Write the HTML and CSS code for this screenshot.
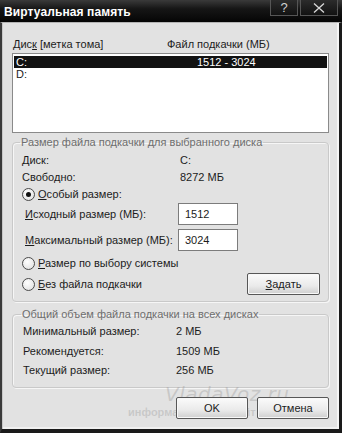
FILE: index.html
```html
<!DOCTYPE html>
<html lang="ru">
<head>
<meta charset="utf-8">
<title>Виртуальная память</title>
<link rel="stylesheet" href="styles.css">
</head>
<body>
<div class="window">
  <div class="titlebar">
    <span class="title">Виртуальная память</span>
    <div class="tb-buttons">
      <span class="tb-btn tb-help">?</span>
      <span class="tb-btn tb-close">
        <svg width="14" height="10" viewBox="0 0 14 10"><path d="M2 0.5 L12 9.5 M12 0.5 L2 9.5" stroke="#d8d8d8" stroke-width="1.3" fill="none"/></svg>
      </span>
    </div>
  </div>
  <div class="frame">
    <div class="list-head">
      <span class="col-disk">Дис<u>к</u> [метка тома]</span>
      <span>Файл подкачки (МБ)</span>
    </div>
    <div class="listbox">
      <div class="list-row selected"><span class="col-drive">C:</span><span>1512 - 3024</span></div>
      <div class="list-row"><span class="col-drive">D:</span><span></span></div>
    </div>

    <fieldset class="group group-one">
      <legend>Размер файла подкачки для выбранного диска</legend>
      <div class="info-row"><span class="info-label">Диск:</span><span>C:</span></div>
      <div class="info-row"><span class="info-label">Свободно:</span><span>8272 МБ</span></div>
      <div class="radio-row"><span class="radio checked"></span><span><u>О</u>собый размер:</span></div>
      <div class="field-row"><span class="field-label"><u>И</u>сходный размер (МБ):</span><span class="input">1512</span></div>
      <div class="field-row second"><span class="field-label"><u>М</u>аксимальный размер (МБ):</span><span class="input">3024</span></div>
      <div class="radio-row sys"><span class="radio"></span><span><u>Р</u>азмер по выбору системы</span></div>
      <div class="last-row">
        <div class="radio-row"><span class="radio"></span><span><u>Б</u>ез файла подкачки</span></div>
        <span class="button set"><u>З</u>адать</span>
      </div>
    </fieldset>

    <fieldset class="group group-two">
      <legend>Общий объем файла подкачки на всех дисках</legend>
      <div class="total-row"><span class="total-label">Минимальный размер:</span><span>2 МБ</span></div>
      <div class="total-row"><span class="total-label">Рекомендуется:</span><span>1509 МБ</span></div>
      <div class="total-row"><span class="total-label">Текущий размер:</span><span>256 МБ</span></div>
    </fieldset>

    <div class="watermark">
      <span class="wm-big">VladaVoz.ru</span>
      <span class="wm-small">информационный сайт</span>
    </div>

    <div class="dialog-buttons">
      <span class="button">OK</span>
      <span class="button">Отмена</span>
    </div>
  </div>
</div>
</body>
</html>
```

FILE: styles.css
```css
* { box-sizing: border-box; }
html, body { margin: 0; padding: 0; background: #1e1e1e; }
body {
  font-family: "Liberation Sans", Arial, sans-serif;
  font-size: 11px;
  color: #1c1c1c;
}
u { text-decoration: underline; text-underline-offset: 1px; }

.window {
  width: 342px;
  height: 433px;
  display: flex;
  flex-direction: column;
  overflow: hidden;
}

.titlebar {
  height: 22px;
  flex: none;
  display: flex;
  justify-content: space-between;
  align-items: flex-start;
  background: linear-gradient(#3a3a3a, #161616 40%, #050505);
}
.title {
  color: #fff;
  font-weight: bold;
  font-size: 12px;
  line-height: 12px;
  padding: 6px 0 0 4px;
  letter-spacing: 0.1px;
}
.tb-buttons {
  display: flex;
  gap: 2px;
  padding-right: 4px;
}
.tb-btn {
  height: 16px;
  display: flex;
  align-items: center;
  justify-content: center;
  border: 1px solid #565656;
  border-top: none;
  background: linear-gradient(#2c2c2c, #121212);
  color: #d0d0d0;
}
.tb-help { width: 28px; font-size: 13px; line-height: 14px; }
.tb-close { width: 38px; }

.frame {
  flex: 1;
  position: relative;
  background: #e2e2e2;
  border-top: 1px solid #b4b4b4;
  border-left: 2px solid #3a3a3a;
  border-right: 3px solid #1a1a1a;
  border-bottom: 4px solid #1a1a1a;
  box-shadow: inset 1px 0 0 #c8c8c8, inset -2px 0 0 #f4f4f4, inset 0 -2px 0 #f0f0f0;
  padding: 0 10px;
  display: flex;
  flex-direction: column;
}

.list-head {
  margin-top: 15px;
  height: 13px;
  line-height: 13px;
  display: flex;
  padding-left: 1px;
}
.col-disk { width: 154px; }

.listbox {
  margin-top: 2px;
  height: 80px;
  background: #fff;
  border: 1px solid #8a8a8a;
  padding: 2px 1px 0;
}
.list-row {
  height: 12px;
  line-height: 12px;
  display: flex;
  padding-left: 2px;
}
.list-row.selected { background: #121212; color: #fff; }
.col-drive { width: 181px; }

.group {
  margin: 3px 0 0;
  padding: 3px 8px 6px 9px;
  border: 1px solid #c9c9c9;
  border-radius: 4px;
  box-shadow: inset 1px 1px 0 #f6f6f6, 1px 1px 0 #f6f6f6;
  min-width: 0;
}
.group legend {
  padding: 0 1px;
  margin-left: -2px;
  line-height: 13px;
  color: #6e6e6e;
}

.info-row { display: flex; line-height: 17px; height: 17px; }
.info-label { width: 158px; }

.radio-row {
  display: flex;
  align-items: center;
  gap: 3px;
  height: 17px;
  line-height: 17px;
}
.radio {
  width: 13px;
  height: 13px;
  border-radius: 50%;
  border: 1px solid #4a4a4a;
  background: radial-gradient(circle at 40% 35%, #ffffff, #dcdcdc);
  display: flex;
  align-items: center;
  justify-content: center;
  flex: none;
}
.radio.checked::after {
  content: "";
  width: 5px;
  height: 5px;
  border-radius: 50%;
  background: #111;
}

.field-row {
  display: flex;
  align-items: center;
  height: 22px;
  padding-left: 3px;
}
.field-row.second { margin-top: 4px; }
.field-label { width: 153px; }
.input {
  width: 60px;
  height: 22px;
  line-height: 20px;
  border: 1px solid #7c7c7c;
  background: #fff;
  padding-left: 6px;
}

.radio-row.sys { margin-top: 4px; }
.last-row {
  margin-top: 1px;
  height: 22px;
  display: flex;
  align-items: center;
  justify-content: space-between;
}

.button {
  width: 72px;
  height: 22px;
  display: flex;
  align-items: center;
  justify-content: center;
  border: 1px solid #575757;
  border-radius: 2px;
  background: linear-gradient(#fbfbfb, #eaeaea 60%, #cfcfcf);
  box-shadow: inset 0 0 0 1px #f8f8f8;
}
.button.set { width: 73px; }

.group-two {
  margin-top: 6px;
  padding: 1px 8px 6px 10px;
}
.total-row { display: flex; height: 19.5px; line-height: 19.5px; }
.total-label { width: 153px; }

.dialog-buttons {
  position: relative;
  z-index: 1;
  margin-top: 9px;
  display: flex;
  justify-content: flex-end;
  gap: 9px;
}

.watermark {
  position: absolute;
  left: 118px;
  top: 360px;
  display: flex;
  flex-direction: column;
  align-items: flex-start;
  pointer-events: none;
}
.wm-big {
  margin-left: 45px;
  font-family: "DejaVu Sans", sans-serif;
  font-style: italic;
  font-size: 20px;
  line-height: 22px;
  color: rgba(150, 150, 150, 0.35);
  letter-spacing: 0.5px;
}
.wm-small {
  margin-left: 8px;
  font-weight: bold;
  font-size: 11px;
  line-height: 14px;
  color: rgba(150, 150, 150, 0.35);
}
```
